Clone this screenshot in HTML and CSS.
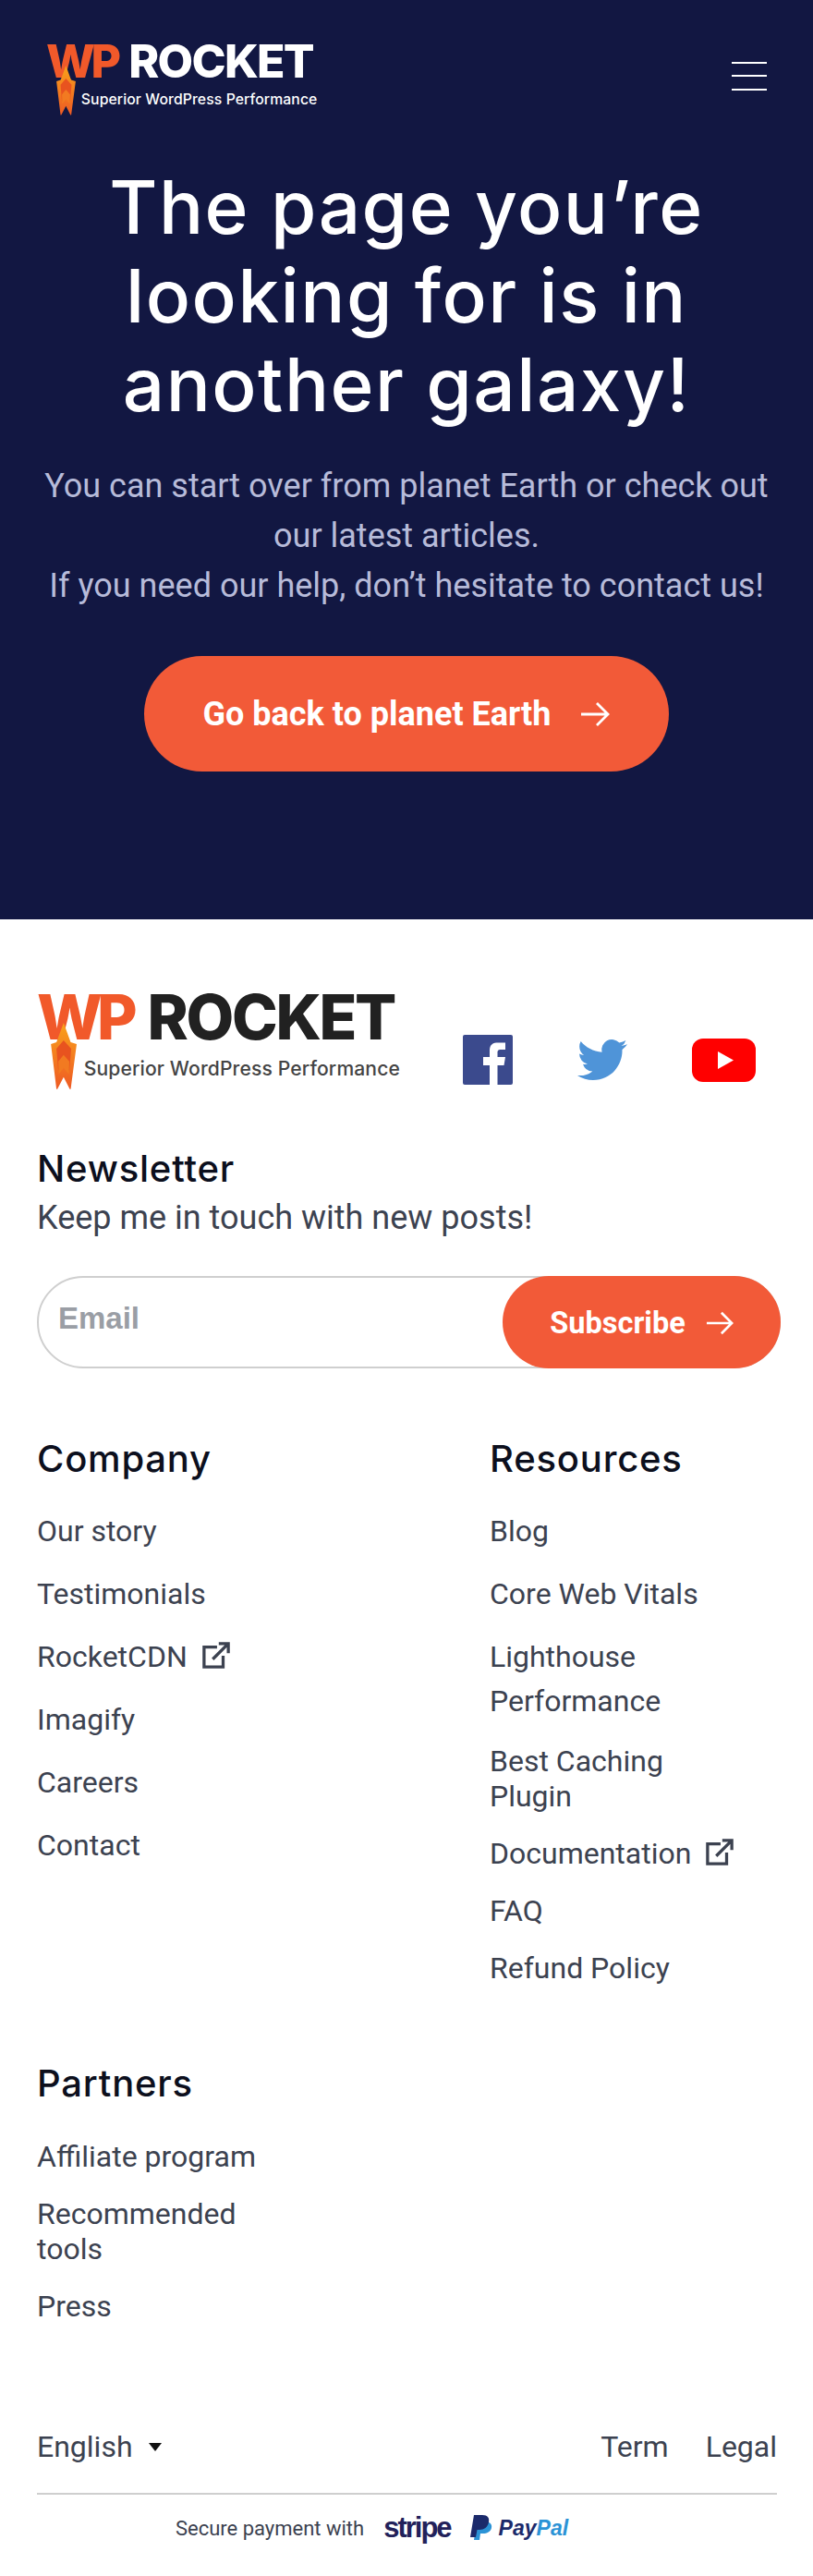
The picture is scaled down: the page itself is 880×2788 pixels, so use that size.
FILE: index.html
```html
<!DOCTYPE html>
<html lang="en">
<head>
    <meta charset="UTF-8">
    <meta name="viewport" content="width=device-width, initial-scale=1.0">
    <title>WP Rocket - Page not found</title>
    <link rel="stylesheet" href="styles.css">
</head>
<body>
    <svg class="sprites" width="0" height="0" aria-hidden="true">
        <defs>
            <linearGradient id="flame-fill" x1="0" y1="0" x2="0" y2="1">
                <stop offset="0" stop-color="#f9a11b"/>
                <stop offset="1" stop-color="#ee5a24"/>
            </linearGradient>
            <symbol id="flame" viewBox="0 0 28 74">
                <path fill="url(#flame-fill)" d="M13.8 0 20 17 21.5 21 28 23 21.5 72 20.5 72 13.8 59 7 72 6 72 0 23 6 21 7.500 17Z"/>
                <path fill="#e8531f" d="M6 28 13.800 19 22 28 20 52 13.800 44 8 52Z"/>
                <path fill="#f27a21" d="M8 42 13.800 35 20 42 19.500 56 13.800 49 8.500 56Z"/>
            </symbol>
            <symbol id="arrow" viewBox="0 0 32 28">
                <path fill="none" stroke="currentColor" stroke-width="2.800" d="M1 14H30M18 2 30 14 18 26"/>
            </symbol>
            <symbol id="external" viewBox="0 0 32 32">
                <path fill="none" stroke="currentColor" stroke-width="3.500" d="M17 6H2V29H24V16M12 20 30 2M19 2H30V13"/>
            </symbol>
        </defs>
    </svg>

    <section class="hero">
        <header class="topbar">
            <a class="logo logo-light" href="#">
                <svg class="logo-flame"><use href="#flame"/></svg>
                <span class="logo-name"><span class="logo-wp">WP</span> ROCKET</span>
                <span class="logo-tag">Superior WordPress Performance</span>
            </a>
            <button class="burger" aria-label="Menu"><span></span><span></span><span></span></button>
        </header>
        <h1>The page you’re looking for is in another galaxy!</h1>
        <p>You can start over from planet Earth or check out our latest articles.<br>If you need our help, don’t hesitate to contact us!</p>
        <a class="btn btn-back" href="#">Go back to planet Earth <svg class="btn-arrow"><use href="#arrow"/></svg></a>
    </section>

    <footer class="footer">
        <div class="brand-row">
            <a class="logo logo-dark" href="#">
                <svg class="logo-flame"><use href="#flame"/></svg>
                <span class="logo-name"><span class="logo-wp">WP</span> ROCKET</span>
                <span class="logo-tag">Superior WordPress Performance</span>
            </a>
            <div class="social">
                <svg class="icon-fb" viewBox="0 0 54 54">
                    <rect width="54" height="54" rx="2" fill="#3b4a8d"/>
                    <path fill="#fff" d="M29 54V33H22V24H29V17C29 10 33 8.500 38 8.500H46V16H41C38 16 37.500 17.500 37.500 19.500V24H46L44.500 33H37.500V54Z"/>
                </svg>
                <svg class="icon-tw" viewBox="0 0 24 24">
                    <path fill="#4f94d8" d="M23.953 4.57a10 10 0 01-2.825.775 4.958 4.958 0 002.163-2.723c-.951.555-2.005.959-3.127 1.184a4.92 4.92 0 00-8.384 4.482C7.69 8.095 4.067 6.13 1.64 3.162a4.822 4.822 0 00-.666 2.475c0 1.71.87 3.213 2.188 4.096a4.904 4.904 0 01-2.228-.616v.06a4.923 4.923 0 003.946 4.827 4.996 4.996 0 01-2.212.085 4.936 4.936 0 004.604 3.417 9.867 9.867 0 01-6.102 2.105c-.39 0-.779-.023-1.17-.067a13.995 13.995 0 007.557 2.209c9.053 0 13.998-7.496 13.998-13.985 0-.21 0-.42-.015-.63A9.935 9.935 0 0024 4.59z"/>
                </svg>
                <svg class="icon-yt" viewBox="0 0 69 47">
                    <rect width="69" height="47" rx="12" fill="#f00"/>
                    <path fill="#fff" d="M28 14 45 23.500 28 33Z"/>
                </svg>
            </div>
        </div>

        <h2 class="news-title">Newsletter</h2>
        <p class="news-text">Keep me in touch with new posts!</p>
        <form class="news-form">
            <input class="news-input" type="text" placeholder="Email">
            <button class="btn btn-sub" type="button">Subscribe <svg class="btn-arrow"><use href="#arrow"/></svg></button>
        </form>

        <div class="cols">
            <div class="col">
                <h3>Company</h3>
                <ul class="links">
                    <li><a href="#">Our story</a></li>
                    <li><a href="#">Testimonials</a></li>
                    <li><a href="#">RocketCDN <svg class="ext"><use href="#external"/></svg></a></li>
                    <li><a href="#">Imagify</a></li>
                    <li><a href="#">Careers</a></li>
                    <li><a href="#">Contact</a></li>
                </ul>
            </div>
            <div class="col">
                <h3>Resources</h3>
                <ul class="links">
                    <li><a href="#">Blog</a></li>
                    <li><a href="#">Core Web Vitals</a></li>
                    <li class="wide"><a href="#">Lighthouse Performance</a></li>
                    <li class="tight"><a href="#">Best Caching Plugin</a></li>
                    <li class="tight"><a href="#">Documentation <svg class="ext"><use href="#external"/></svg></a></li>
                    <li class="tight"><a href="#">FAQ</a></li>
                    <li class="tight"><a href="#">Refund Policy</a></li>
                </ul>
            </div>
            <div class="col col-partners">
                <h3>Partners</h3>
                <ul class="links">
                    <li class="tight"><a href="#">Affiliate program</a></li>
                    <li class="tight"><a href="#">Recommended tools</a></li>
                    <li class="tight"><a href="#">Press</a></li>
                </ul>
            </div>
        </div>

        <div class="legal-row">
            <a class="lang" href="#">English <span class="caret"></span></a>
            <div class="legal-links"><a href="#">Term</a><a href="#">Legal</a></div>
        </div>
        <div class="payment">
            <span>Secure payment with</span>
            <span class="stripe">stripe</span>
            <svg class="pp-mark" viewBox="0 0 24 28">
                <path fill="#2b93d6" d="M7 7H16C21 7 24 10 23 14 22 18 18 20 14 20H11L10 27H4Z"/>
                <path fill="#1b2a6b" d="M4 0H13C19 0 21 3 20 8 19 13 15 16 10 16H7.500L6 24H0Z"/>
            </svg>
            <span class="paypal"><span class="pay">Pay</span>Pal</span>
        </div>
    </footer>
</body>
</html>
```

FILE: styles.css
```css
html, body {
    margin: 0;
    padding: 0;
    background-color: #fff;
    font-family: Roboto, "Liberation Sans", sans-serif;
    color: #3c4250;
}
a {
    color: inherit;
    text-decoration: none;
}
.sprites {
    display: block;
    height: 0;
}

/* logo, sized in em so that both copies share it */
.logo {
    position: relative;
    display: block;
    font-family: Inter, "Liberation Sans", sans-serif;
    font-weight: 800;
    line-height: 1;
}
.logo-light {
    font-size: 50px;
    width: 295px;
    color: #fff;
}
.logo-dark {
    font-size: 67px;
    width: 390px;
    color: #212121;
}
.logo-name {
    display: block;
    letter-spacing: -0.035em;
    white-space: nowrap;
}
.logo-wp {
    color: #f1592a;
    letter-spacing: -0.09em;
    margin-right: 0.07em;
}
.logo-tag {
    display: block;
    margin: 0.55em 0 0 2.4em;
    font-size: 0.315em;
    font-weight: 500;
    white-space: nowrap;
    letter-spacing: 0.006em;
}
.logo-dark .logo-tag {
    color: #444;
}
.logo-flame {
    position: absolute;
    left: 0.22em;
    top: 0.6em;
    width: 0.42em;
    height: 1.1em;
}

/* hero */
.hero {
    background-color: #121742;
    height: 995px;
    box-sizing: border-box;
    padding: 41px 50px 0;
    text-align: center;
}
.topbar {
    display: flex;
    justify-content: space-between;
    align-items: center;
    text-align: left;
}
.burger {
    display: flex;
    flex-direction: column;
    gap: 12.500px;
    padding: 0;
    margin-top: 8px;
    background: none;
    border: none;
}
.burger span {
    display: block;
    width: 38px;
    height: 2px;
    background-color: #fff;
}
.hero h1 {
    margin: 61px -10px 0;
    font-family: Inter, "Liberation Sans", sans-serif;
    font-size: 80px;
    line-height: 96px;
    letter-spacing: 1.500px;
    font-weight: 500;
    color: #fff;
}
.hero p {
    margin: 35px -10px 49px;
    font-size: 36px;
    line-height: 54px;
    font-weight: 400;
    color: #b7bbd9;
}

/* buttons */
.btn {
    display: inline-flex;
    align-items: center;
    justify-content: center;
    box-sizing: border-box;
    background-color: #f25a38;
    color: #fff;
    border: none;
    border-radius: 63px;
    font-family: Roboto, sans-serif;
    font-weight: 700;
}
.btn-back {
    width: 568px;
    height: 125px;
    font-size: 36px;
    gap: 32px;
}
.btn-arrow {
    width: 32px;
    height: 28px;
}

/* footer */
.footer {
    padding: 72px 35px 0 40px;
}
.brand-row {
    display: flex;
    justify-content: space-between;
    align-items: flex-start;
}
.social {
    display: flex;
    align-items: center;
    margin: 53px 27px 0 0;
    gap: 70px;
}
.icon-fb {
    width: 54px;
    height: 54px;
}
.icon-tw {
    width: 54px;
    height: 54px;
}
.icon-yt {
    width: 69px;
    height: 47px;
}
h2, h3 {
    margin: 0;
    font-family: Inter, "Liberation Sans", sans-serif;
    font-size: 40px;
    line-height: 48px;
    letter-spacing: 0.800px;
    font-weight: 500;
    color: #0c0f1d;
}
.news-title {
    margin-top: 67px;
}
.news-text {
    margin: 4px 0 0;
    font-size: 36px;
    line-height: 50px;
    font-weight: 400;
}
.news-form {
    position: relative;
    display: flex;
    margin-top: 38px;
}
.news-input {
    flex: 1;
    box-sizing: border-box;
    height: 100px;
    padding: 0 20px 8px 21px;
    border: 2px solid #cfcfcf;
    border-radius: 50px;
    background: none;
    outline: none;
    font-family: "Liberation Sans", Arial, sans-serif;
    font-size: 33px;
    font-weight: 700;
}
.news-input::placeholder {
    color: #9a9ea5;
    opacity: 1;
}
.btn-sub {
    position: absolute;
    right: 0;
    top: 0;
    width: 301px;
    height: 100px;
    font-size: 32.500px;
    gap: 22px;
    padding-top: 2px;
}
.btn-sub .btn-arrow {
    width: 30px;
}
.cols {
    display: grid;
    grid-template-columns: 490px 1fr;
    margin-top: 74px;
}
.col-partners {
    margin-top: 58px;
}
.links {
    list-style: none;
    margin: 30px 0 0;
    padding: 0;
    width: 272px;
    font-size: 32px;
    font-weight: 400;
}
.col-partners .links {
    margin-top: 36px;
}
.links li {
    line-height: 48px;
    margin-bottom: 20px;
}
.links li.wide {
    margin-bottom: 22px;
}
.links li.tight {
    line-height: 38px;
    margin-bottom: 24px;
}
.ext {
    width: 30px;
    height: 30px;
    margin: -8px 0 -8px 8px;
    vertical-align: 5px;
}
.legal-row {
    display: flex;
    justify-content: space-between;
    align-items: center;
    margin: 84px 4px 0 0;
    padding-bottom: 25px;
    border-bottom: 2px solid #cfcfcf;
    font-size: 32px;
    line-height: 50px;
    font-weight: 400;
}
.caret {
    display: inline-block;
    width: 0;
    height: 0;
    margin-left: 10px;
    border: 7px solid transparent;
    border-top: 9px solid #111;
    border-bottom: 0;
    vertical-align: 6px;
}
.legal-links {
    display: flex;
    gap: 40px;
}
.payment {
    display: flex;
    align-items: center;
    justify-content: center;
    margin-top: 18px;
    padding-right: 80px;
    font-size: 22px;
    font-weight: 400;
}
.stripe {
    margin-left: 21px;
    font-family: "Liberation Sans", sans-serif;
    font-size: 31px;
    font-weight: 700;
    letter-spacing: -2px;
    color: #22215a;
}
.pp-mark {
    width: 24px;
    height: 28px;
    margin-left: 21px;
}
.paypal {
    margin-left: 7px;
    font-family: "Liberation Sans", sans-serif;
    font-size: 23px;
    font-weight: 700;
    font-style: italic;
    color: #2b93d6;
}
.pay {
    color: #1b2a6b;
}
```
